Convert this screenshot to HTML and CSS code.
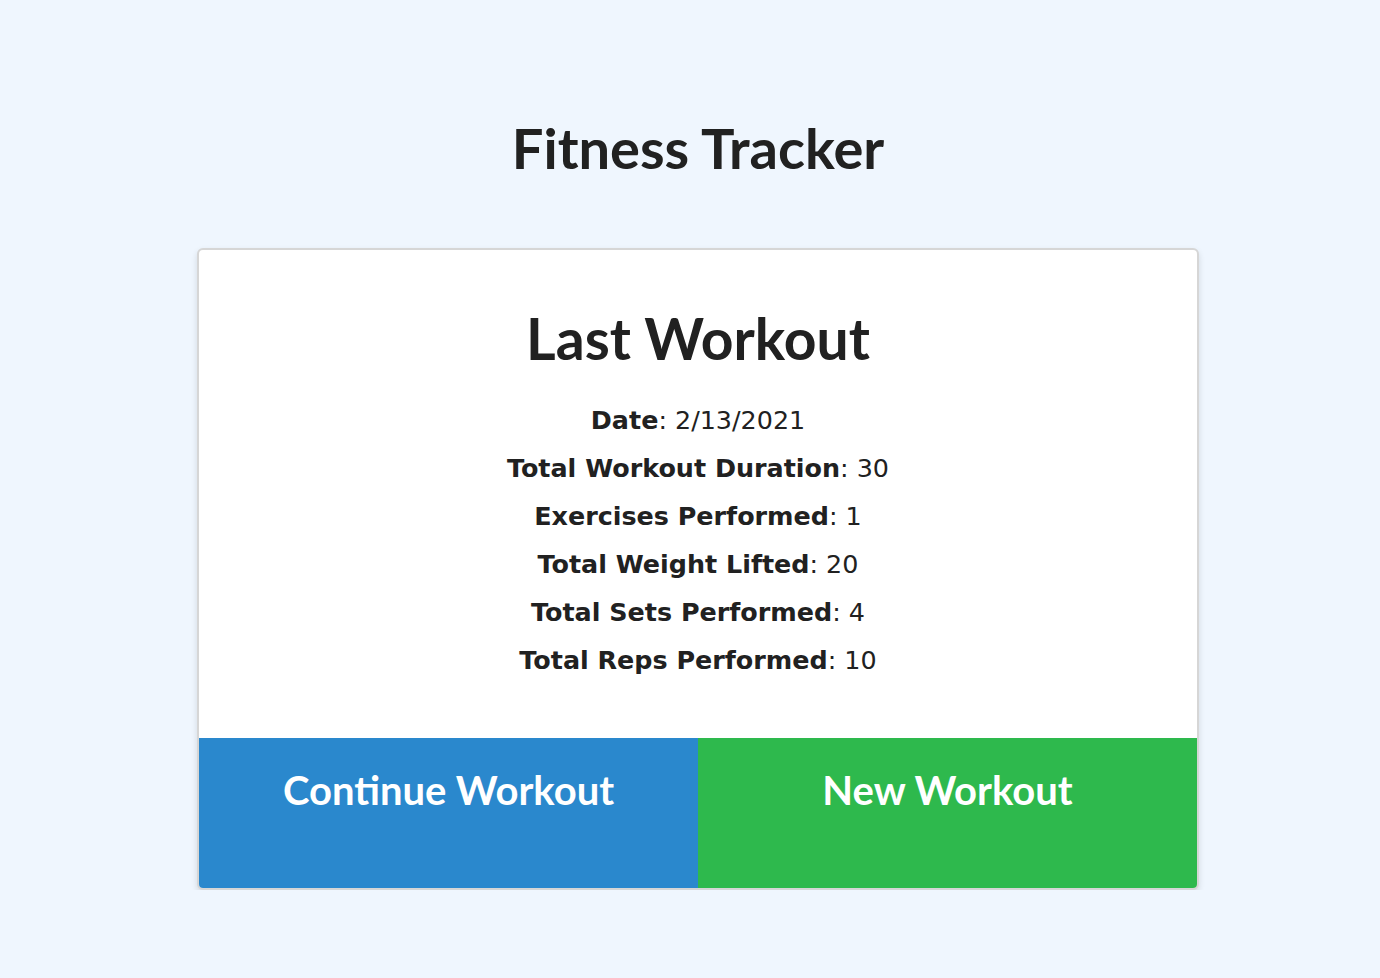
FILE: index.html
```html
<!DOCTYPE html>
<html>
<head>
<meta charset="utf-8">
<link rel="stylesheet" href="styles.css">
</head>
<body>
<h1 class="title">Fitness Tracker</h1>
<div class="card">
  <div class="card-body">
    <h2 class="card-title">Last Workout</h2>
    <div class="stats">
      <p><strong>Date</strong>: 2/13/2021</p>
      <p><strong>Total Workout Duration</strong>: 30</p>
      <p><strong>Exercises Performed</strong>: 1</p>
      <p><strong>Total Weight Lifted</strong>: 20</p>
      <p><strong>Total Sets Performed</strong>: 4</p>
      <p><strong>Total Reps Performed</strong>: 10</p>
    </div>
  </div>
  <div class="actions">
    <a class="btn btn-continue">Continue Workout</a>
    <a class="btn btn-new">New Workout</a>
  </div>
</div>
</body>
</html>
```
FILE: styles.css
```css
html, body {
  margin: 0;
  padding: 0;
}
body {
  background: #eff6fe;
  font-family: Lato, "Liberation Sans", sans-serif;
  color: #212121;
  padding: 112px 0 0 16px;
}
.title {
  margin: 0;
  text-align: center;
  font-size: 56px;
  font-weight: 700;
  line-height: 72px;
}
.card {
  width: 1002px;
  margin: 64px auto 0;
  background: #fff;
  border: 2px solid #d6d6d6;
  border-radius: 6px;
  box-shadow: 0 3px 6px rgba(0,0,0,0.12);
  overflow: hidden;
  box-sizing: border-box;
}
.card-body {
  padding: 52px 0 54px;
  text-align: center;
}
.card-title {
  margin: 0 0 22px;
  font-size: 57px;
  font-weight: 700;
  line-height: 72px;
}
.stats p {
  margin: 0;
  font-family: Tahoma, "DejaVu Sans", sans-serif;
  font-size: 25.4px;
  line-height: 48px;
}
.stats strong {
  font-weight: 700;
}
.actions {
  display: flex;
}
.btn {
  flex: 1;
  height: 150px;
  box-sizing: border-box;
  padding-top: 28px;
  text-align: center;
  color: #fff;
  font-size: 40px;
  font-weight: 700;
  line-height: 48px;
}
.btn-continue {
  background: #2a88cd;
}
.btn-new {
  background: #2eb94d;
}
```
